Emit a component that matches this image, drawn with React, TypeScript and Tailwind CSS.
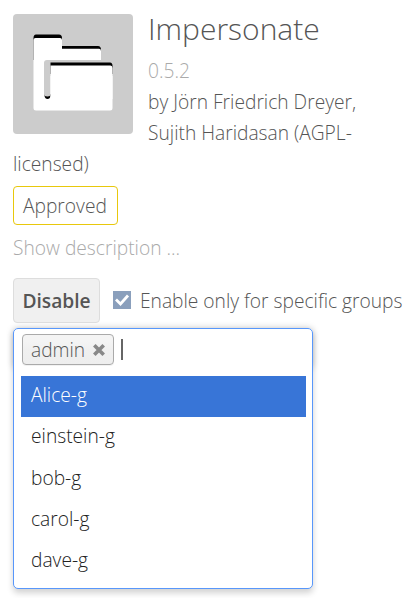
const groups = ['Alice-g', 'einstein-g', 'bob-g', 'carol-g', 'dave-g'];

function FolderIcon() {
  return (
    <svg viewBox="0 0 120 120" className="h-[120px] w-[120px]">
      <path d="M20.500 24Q20.500 20.500 23 20.500H46Q49 20.500 49 24V32H85Q88 32 88 36V46H20.500Z" fill="#000" />
      <path d="M20.500 26Q20.500 24 22.500 24H47Q49 24 49 26V34.800H86Q88 34.800 88 37V60H97Q99.500 60 99.500 62V94Q99.500 96.500 97 96.500H23Q20.500 96.500 20.500 94Z" fill="#fff" />
      <path d="M31.500 80V82Q32 85 34.500 85Q37 85 37.500 82V80Z" fill="#000" />
      <path d="M31 49Q31 46 34 46H100V62H37.500V80Q37.500 82.500 34.500 82.500Q31 82.500 31 80Z" fill="#ccc" />
      <path d="M37.500 48.500H97Q99.500 48.500 99.500 52V60H37.500Z" fill="#000" />
      <path d="M37.500 51.500H97.500Q99.500 51.500 99.500 54V85H37.500Z" fill="#fff" />
    </svg>
  );
}

function GroupSelect() {
  return (
    <div className="relative mt-[5px] h-[261px] w-[300px] rounded-[5px] border border-[#5897fb] bg-white px-[7px] shadow-[0_4px_6px_rgba(0,0,0,0.18)]">
      <div className="absolute -inset-x-px -top-px -z-10 h-[41px] rounded-[5px] shadow-[0_0_7px_rgba(0,0,0,0.22)]" />
      <div className="flex h-[47px] items-start pt-[5px] pl-px">
        <div className="flex h-[31px] w-[92px] items-center rounded-[4px] border border-[#aaa] bg-linear-to-b from-[#f4f4f4] from-20% via-[#f0f0f0] via-50% to-[#eee] pl-2 text-[#555] shadow-[0_1px_0_rgba(0,0,0,0.05)]">
          <span className="w-[62px]">admin</span>
          <svg viewBox="0 0 12 12" className="h-3 w-3" stroke="#888" strokeWidth="3.6">
            <path d="M1.300 1.300L10.700 10.700M10.700 1.300L1.300 10.700" />
          </svg>
        </div>
        <span className="mt-[5px] ml-[7px] h-[21px] w-[2px] bg-[#666]" />
      </div>
      <ul className="w-[285px]">
        {groups.map((group, index) => (
          <li
            key={group}
            className={`flex h-[41.300px] items-center pl-[10px] pb-[4px] ${index === 0 ? 'bg-[#3875d7] text-white' : 'text-[#222]'}`}
          >
            {group}
          </li>
        ))}
      </ul>
    </div>
  );
}

export default function App() {
  return (
    <main className="relative z-0 h-[598px] w-[414px] overflow-hidden bg-white px-[13px] pt-[14px] font-['Open_Sans',sans-serif] text-[19.200px] leading-[31px] font-light whitespace-nowrap text-[#555]">
      <section className="h-[172px]">
        <div className="float-left mr-[15px] rounded-[4px] bg-[#ccc]">
          <FolderIcon />
        </div>
        <h1 className="h-[41px] text-[30px] leading-[29px]">Impersonate</h1>
        <p className="text-[#aaa]">0.5.2</p>
        <p>
          by Jörn Friedrich Dreyer,
          <br />
          Sujith Haridasan (AGPL-
          <br />
          licensed)
        </p>
      </section>
      <div className="flex h-[39px] w-[105px] items-center rounded-[4px] border border-[#e8c80c] pl-[9px]">Approved</div>
      <p className="mt-[7px] h-[46px] text-[#aaa]">Show description ...</p>
      <div className="flex h-[45px] items-center">
        <button className="h-[45px] w-[87px] shrink-0 rounded-[4px] border border-[#ddd] bg-[#f0f0f0] text-center font-semibold">Disable</button>
        <label className="flex shrink-0 items-center">
          <svg viewBox="0 0 18 18" className="mr-[9px] ml-[13px] h-[18px] w-[18px] shrink-0 -translate-y-px">
            <path d="M0 0H18V18H0Z" fill="#8a9fbc" />
            <path d="M3 8.500L7.500 13L15 4.500" fill="none" stroke="#fff" strokeWidth="2.800" />
          </svg>
          <span>Enable only for specific groups</span>
        </label>
      </div>
      <GroupSelect />
    </main>
  );
}
